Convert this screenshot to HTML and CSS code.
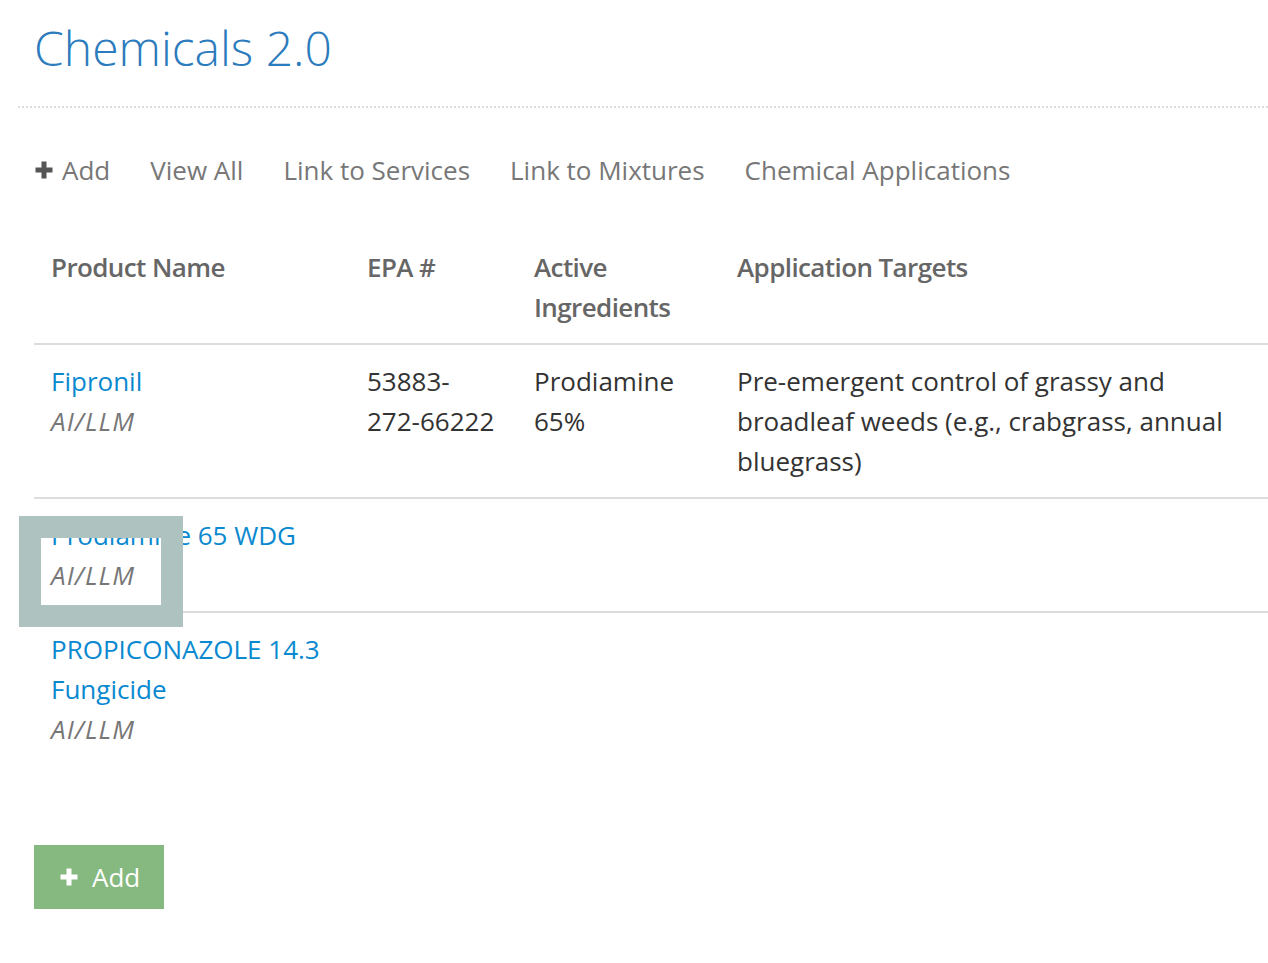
FILE: index.html
```html
<!DOCTYPE html>
<html lang="en">
<head>
<meta charset="utf-8">
<title>Chemicals 2.0</title>
<link rel="stylesheet" href="styles.css">
</head>
<body>
<div class="page">
  <div class="title-bar">
    <h1 class="title">Chemicals 2.0</h1>
  </div>
  <nav class="nav">
    <a class="nav-item" href="#"><svg class="plus" viewBox="0 0 20 20" width="20" height="20"><path d="M7.5 1.5h5v6h6v5h-6v6h-5v-6h-6v-5h6z" fill="#555"/></svg>Add</a>
    <a class="nav-item" href="#">View All</a>
    <a class="nav-item" href="#">Link to Services</a>
    <a class="nav-item" href="#">Link to Mixtures</a>
    <a class="nav-item" href="#">Chemical Applications</a>
  </nav>
  <table class="grid">
    <colgroup>
      <col class="c1"><col class="c2"><col class="c3"><col>
    </colgroup>
    <thead>
      <tr>
        <th>Product Name</th>
        <th>EPA #</th>
        <th>Active<br>Ingredients</th>
        <th>Application Targets</th>
      </tr>
    </thead>
    <tbody>
      <tr>
        <td><a class="link" href="#">Fipronil</a><div class="src">AI/LLM</div></td>
        <td>53883-<br>272-66222</td>
        <td>Prodiamine<br>65%</td>
        <td>Pre-emergent control of grassy and broadleaf weeds (e.g., crabgrass, annual bluegrass)</td>
      </tr>
      <tr>
        <td><a class="link" href="#">Prodiamine 65 WDG</a><div class="src">AI/LLM</div></td>
        <td></td><td></td><td></td>
      </tr>
      <tr class="last">
        <td><a class="link" href="#">PROPICONAZOLE 14.3 Fungicide</a><div class="src">AI/LLM</div></td>
        <td></td><td></td><td></td>
      </tr>
    </tbody>
  </table>
  <button class="btn-add" type="button"><svg class="plus" viewBox="0 0 20 20" width="20" height="20"><path d="M7.5 1.5h5v6h6v5h-6v6h-5v-6h-6v-5h6z" fill="#fff"/></svg>Add</button>
</div>
<div class="focus-box"></div>
</body>
</html>
```

FILE: styles.css
```css
html, body {
  margin: 0;
  padding: 0;
  background: #fff;
}
body {
  font-family: "Open Sans", "Liberation Sans", sans-serif;
  font-size: 26px;
  color: #333;
}
.page {
  padding-left: 18px;
  padding-bottom: 40px;
}
.title-bar {
  border-bottom: 2px dotted #dcdcdc;
  padding-bottom: 30px;
}
.title {
  margin: 20px 0 0 16px;
  font-size: 48px;
  line-height: 56px;
  font-weight: 300;
  color: #2b7bbd;
}
.nav {
  display: flex;
  gap: 40px;
  margin: 42px 0 0 16px;
  line-height: 40px;
}
.nav-item {
  display: flex;
  align-items: center;
  gap: 8px;
  color: #777;
  text-decoration: none;
}
.plus {
  display: block;
  flex: none;
}
.grid {
  margin: 41px 0 0 16px;
  width: 1234px;
  table-layout: fixed;
  border-collapse: collapse;
  line-height: 40px;
}
.c1 { width: 316px; }
.c2 { width: 167px; }
.c3 { width: 203px; }
.grid th {
  text-align: left;
  vertical-align: top;
  font-weight: 600;
  color: #666;
  letter-spacing: -0.6px;
  padding: 16px 17px;
  border-bottom: 2px solid #ddd;
}
.grid td {
  vertical-align: top;
  padding: 16px 17px;
  border-bottom: 2px solid #ddd;
}
.grid tr.last td {
  border-bottom: none;
}
.link {
  color: #0a89d0;
  text-decoration: none;
}
.src {
  font-style: italic;
  letter-spacing: 1.1px;
  color: #777;
}
.btn-add {
  display: flex;
  align-items: center;
  gap: 13px;
  margin: 80px 0 0 16px;
  height: 64px;
  padding: 0 24px 0 25px;
  border: none;
  background: #86b97f;
  color: #fff;
  font-family: "Open Sans", "Liberation Sans", sans-serif;
  font-size: 26px;
  line-height: 40px;
  cursor: pointer;
}
.focus-box {
  position: absolute;
  left: 19px;
  top: 516px;
  width: 120px;
  height: 67px;
  border: 22px solid #aec2c0;
  background: transparent;
}
```
